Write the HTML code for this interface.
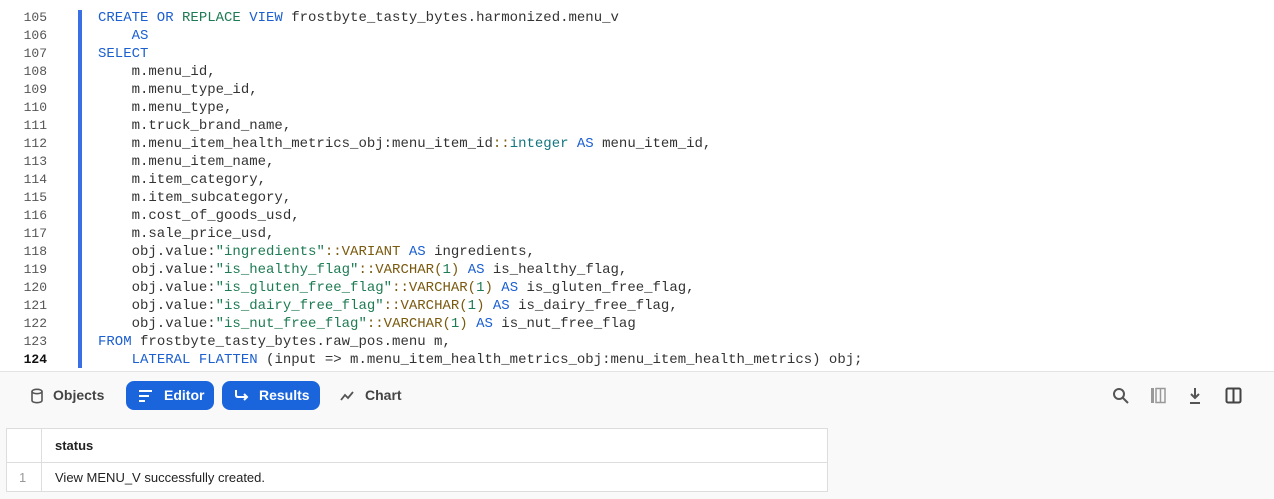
<!DOCTYPE html>
<html><head><style>
body{margin:0;width:1274px;height:499px;overflow:hidden;background:#fff;font-family:"Liberation Sans",sans-serif;position:relative}
.code{position:absolute;left:0;top:9px;width:1274px;font-family:"Liberation Mono",monospace;font-size:14px;line-height:18px;color:#333}
.ln{position:absolute;left:0;width:47px;text-align:right;color:#555;font-size:13px}
.tx{position:absolute;left:98px;white-space:pre}
.bar{position:absolute;left:78px;top:10px;width:4px;height:358px;background:#3b6fe6}
.k{color:#1b5fd1}.g{color:#1e7b53}.s{color:#1e7b53}.t{color:#7a5a0f}.i{color:#15757f}
.tb{position:absolute;left:0;top:371px;width:1274px;height:47px;background:#f9f9f9;border-top:1px solid #e4e4e4;border-bottom:1px solid #e4e4e4}
.btn{position:absolute;top:9px;height:29px;border-radius:8px;font-size:14px;font-weight:bold;line-height:29px;color:#444;display:flex;align-items:center}
.btn.on{background:#1a64dc;color:#fff}
.btm{position:absolute;left:0;top:419px;width:1274px;height:80px;background:#f9f9f9}
table{position:absolute;left:6px;top:428px;border-collapse:collapse;background:#fff;font-size:13px;color:#222}
td{border:1px solid #ddd;height:33px;padding:0 0 0 13px}
</style></head><body>
<div class="bar"></div>
<div class="code">
<div class="ln" style="top:0">105</div><div class="tx" style="top:0"><span class="k">CREATE OR </span><span class="g">REPLACE</span><span class="k"> VIEW</span> frostbyte_tasty_bytes.harmonized.menu_v</div>
<div class="ln" style="top:18px">106</div><div class="tx" style="top:18px">    <span class="k">AS</span></div>
<div class="ln" style="top:36px">107</div><div class="tx" style="top:36px"><span class="k">SELECT</span></div>
<div class="ln" style="top:54px">108</div><div class="tx" style="top:54px">    m.menu_id,</div>
<div class="ln" style="top:72px">109</div><div class="tx" style="top:72px">    m.menu_type_id,</div>
<div class="ln" style="top:90px">110</div><div class="tx" style="top:90px">    m.menu_type,</div>
<div class="ln" style="top:108px">111</div><div class="tx" style="top:108px">    m.truck_brand_name,</div>
<div class="ln" style="top:126px">112</div><div class="tx" style="top:126px">    m.menu_item_health_metrics_obj:menu_item_id<span class="t">::</span><span class="i">integer</span> <span class="k">AS</span> menu_item_id,</div>
<div class="ln" style="top:144px">113</div><div class="tx" style="top:144px">    m.menu_item_name,</div>
<div class="ln" style="top:162px">114</div><div class="tx" style="top:162px">    m.item_category,</div>
<div class="ln" style="top:180px">115</div><div class="tx" style="top:180px">    m.item_subcategory,</div>
<div class="ln" style="top:198px">116</div><div class="tx" style="top:198px">    m.cost_of_goods_usd,</div>
<div class="ln" style="top:216px">117</div><div class="tx" style="top:216px">    m.sale_price_usd,</div>
<div class="ln" style="top:234px">118</div><div class="tx" style="top:234px">    obj.value:<span class="s">"ingredients"</span><span class="t">::VARIANT</span> <span class="k">AS</span> ingredients,</div>
<div class="ln" style="top:252px">119</div><div class="tx" style="top:252px">    obj.value:<span class="s">"is_healthy_flag"</span><span class="t">::VARCHAR(</span><span class="s">1</span><span class="t">)</span> <span class="k">AS</span> is_healthy_flag,</div>
<div class="ln" style="top:270px">120</div><div class="tx" style="top:270px">    obj.value:<span class="s">"is_gluten_free_flag"</span><span class="t">::VARCHAR(</span><span class="s">1</span><span class="t">)</span> <span class="k">AS</span> is_gluten_free_flag,</div>
<div class="ln" style="top:288px">121</div><div class="tx" style="top:288px">    obj.value:<span class="s">"is_dairy_free_flag"</span><span class="t">::VARCHAR(</span><span class="s">1</span><span class="t">)</span> <span class="k">AS</span> is_dairy_free_flag,</div>
<div class="ln" style="top:306px">122</div><div class="tx" style="top:306px">    obj.value:<span class="s">"is_nut_free_flag"</span><span class="t">::VARCHAR(</span><span class="s">1</span><span class="t">)</span> <span class="k">AS</span> is_nut_free_flag</div>
<div class="ln" style="top:324px">123</div><div class="tx" style="top:324px"><span class="k">FROM</span> frostbyte_tasty_bytes.raw_pos.menu m,</div>
<div class="ln" style="top:342px;color:#111;font-weight:bold">124</div><div class="tx" style="top:342px">    <span class="k">LATERAL FLATTEN</span> (input =&gt; m.menu_item_health_metrics_obj:menu_item_health_metrics) obj;</div>
</div>
<div class="tb">
<div class="btn" style="left:30px"><svg width="14" height="16" viewBox="0 0 14 16" style="margin-right:9px"><ellipse cx="7" cy="3.5" rx="5" ry="2.2" fill="none" stroke="#555" stroke-width="1.6"/><path d="M2 3.5V12.5c0 1.2 2.2 2.2 5 2.2s5-1 5-2.2V3.5" fill="none" stroke="#555" stroke-width="1.6"/></svg>Objects</div>
<div class="btn on" style="left:126px;width:88px"><svg width="16" height="14" viewBox="0 0 16 14" style="margin:0 10px 0 12px"><path d="M1 2h13M1 7h10M1 12h6" stroke="#fff" stroke-width="2"/></svg>Editor</div>
<div class="btn on" style="left:222px;width:98px"><svg width="16" height="14" viewBox="0 0 16 14" style="margin:0 9px 0 12px"><path d="M2 1v5c0 1.5 1 2 2 2h9M10 5l3 3-3 3" fill="none" stroke="#fff" stroke-width="2"/></svg>Results</div>
<div class="btn" style="left:340px"><svg width="16" height="12" viewBox="0 0 16 12" style="margin-right:9px"><path d="M1 10l4-5 3 3 5-6" fill="none" stroke="#555" stroke-width="1.8"/></svg>Chart</div>
<svg style="position:absolute;left:1112px;top:15px" width="18" height="18" viewBox="0 0 18 18"><circle cx="7" cy="7" r="5" fill="none" stroke="#555" stroke-width="2"/><path d="M11 11l5 5" stroke="#555" stroke-width="2"/></svg>
<svg style="position:absolute;left:1150px;top:15px" width="17" height="17" viewBox="0 0 17 17"><rect x="1" y="1" width="3" height="15" fill="#999"/><rect x="6" y="1.5" width="9" height="14" fill="none" stroke="#999" stroke-width="1.5"/><path d="M10.5 1.5v14" stroke="#999" stroke-width="1.5"/></svg>
<svg style="position:absolute;left:1188px;top:15px" width="14" height="18" viewBox="0 0 14 18"><path d="M7 1v10M3 7l4 4 4-4M2 16h10" fill="none" stroke="#555" stroke-width="2"/></svg>
<svg style="position:absolute;left:1225px;top:15px" width="18" height="18" viewBox="0 0 18 18"><rect x="1.5" y="1.5" width="14" height="14" rx="1.5" fill="none" stroke="#444" stroke-width="2"/><path d="M8.5 1.5v14" stroke="#444" stroke-width="2"/></svg>
</div>
<div class="btm"></div>
<table>
<tr><td style="width:21px"></td><td style="width:772px;font-weight:bold">status</td></tr>
<tr><td style="height:28px;color:#999;padding-left:12px;width:22px">1</td><td style="height:28px">View MENU_V successfully created.</td></tr>
</table>
</body></html>
